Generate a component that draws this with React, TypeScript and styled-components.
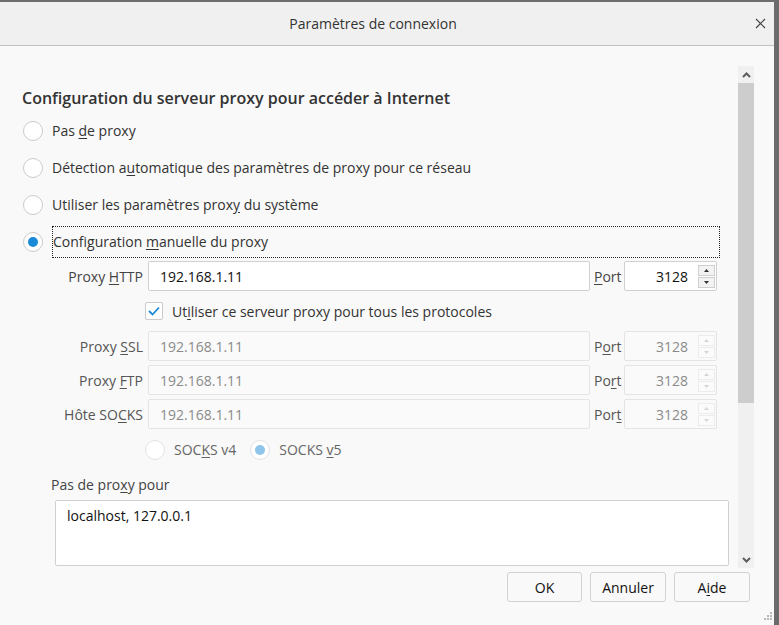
import React from "react";
import styled, { createGlobalStyle } from "styled-components";

const GlobalStyle = createGlobalStyle`
  html, body {
    margin: 0;
    padding: 0;
    background: #f9f9f9;
  }
  body {
    font-family: "Open Sans", "Noto Sans", sans-serif;
    font-size: 14px;
    color: #333;
  }
`;

const Window = styled.div`
  position: relative;
  width: 779px;
  height: 625px;
  box-sizing: border-box;
  border-top: 2px solid #6e6e6e;
  border-right: 5px solid #6b6b6b;
  background: #f9f9f9;
  display: flex;
  flex-direction: column;
  overflow: hidden;
`;

const TitleBar = styled.div`
  height: 43px;
  flex: none;
  display: flex;
  align-items: center;
  background: #f0f0f0;
  border-bottom: 1px solid #c3c3c3;
`;

const Title = styled.div`
  flex: 1;
  text-align: center;
  font-size: 14px;
  color: #333;
`;

const CloseButton = styled.div`
  width: 28px;
  height: 28px;
  display: flex;
  align-items: center;
  justify-content: center;
`;

const Body = styled.div`
  flex: 1;
  display: flex;
  flex-direction: column;
  padding-top: 20px;
`;

const ScrollPane = styled.div`
  height: 502px;
  display: flex;
  overflow: hidden;
`;

const Content = styled.div`
  flex: 1;
  padding: 22px 0 0 22px;
  overflow: hidden;
`;

const Heading = styled.h1`
  margin: 0 0 4px;
  font-size: 16px;
  line-height: 20px;
  font-weight: 600;
  color: #333;
`;

const RadioRow = styled.div`
  height: 37px;
  display: flex;
  align-items: center;
  padding-left: 1px;
  gap: 9px;
  padding-right: 18px;
`;

const RadioCircle = styled.span<{ $checked?: boolean; $disabled?: boolean }>`
  width: 18px;
  height: 18px;
  flex: none;
  border-radius: 50%;
  border: 1px solid ${(p) => (p.$disabled ? "#e2e2e2" : "#cbcbcb")};
  background: #fff;
  display: flex;
  align-items: center;
  justify-content: center;

  &::after {
    content: "";
    display: ${(p) => (p.$checked ? "block" : "none")};
    width: 10px;
    height: 10px;
    border-radius: 50%;
    background: ${(p) => (p.$disabled ? "#8fc5ea" : "#1a8ad8")};
  }
`;

const RadioLabel = styled.span<{ $focused?: boolean; $disabled?: boolean }>`
  line-height: 20px;
  color: ${(p) => (p.$disabled ? "#666" : "#333")};
  ${(p) =>
    p.$focused &&
    `
    flex: 1;
    border: 1px dotted #222;
    height: 30px;
    display: flex;
    align-items: center;
    padding-left: 0;
  `}
`;

const Key = styled.u`
  text-decoration: underline;
  text-underline-offset: 2px;
`;

const FieldGrid = styled.div`
  margin-top: 1px;
  padding-left: 33px;
  display: grid;
  grid-template-columns: 89px 442px 26px 93px;
  grid-auto-rows: auto;
  column-gap: 4px;
  row-gap: 4px;
  align-items: center;
`;

const FieldLabel = styled.span<{ $disabled?: boolean }>`
  text-align: right;
  padding-right: 1px;
  white-space: nowrap;
  color: ${(p) => (p.$disabled ? "#555" : "#444")};
`;

const TextBox = styled.div<{ $disabled?: boolean }>`
  height: 30px;
  box-sizing: border-box;
  border: 1px solid ${(p) => (p.$disabled ? "#e4e4e4" : "#d0d0d0")};
  border-radius: 2px;
  background: ${(p) => (p.$disabled ? "#fafafa" : "#fff")};
  color: ${(p) => (p.$disabled ? "#8a8a8a" : "#111")};
  display: flex;
  align-items: center;
  padding-left: 11px;
`;

const PortBox = styled(TextBox)`
  justify-content: flex-end;
  padding-left: 0;
  padding-right: 1px;
`;

const PortValue = styled.span`
  margin-right: 10px;
`;

const Spin = styled.div`
  width: 17px;
  height: 23px;
  display: flex;
  flex-direction: column;
  gap: 1px;
`;

const SpinButton = styled.div<{ $disabled?: boolean }>`
  flex: 1;
  box-sizing: border-box;
  border: 1px solid ${(p) => (p.$disabled ? "#ececec" : "#cfcfcf")};
  background: ${(p) => (p.$disabled ? "#fbfbfb" : "#f2f2f2")};
  display: flex;
  align-items: center;
  justify-content: center;
`;

const SpanRow = styled.div<{ $height: number }>`
  grid-column: 2 / -1;
  height: ${(p) => p.$height}px;
  margin-left: -3px;
  display: flex;
  align-items: center;
`;

const CheckBox = styled.span`
  width: 18px;
  height: 18px;
  box-sizing: border-box;
  border: 1px solid #cbcbcb;
  border-radius: 2px;
  background: #fff;
  display: flex;
  align-items: center;
  justify-content: center;
  margin-right: 9px;
`;

const SocksOption = styled.span`
  display: flex;
  align-items: center;
  gap: 9px;
  margin-right: 14px;
`;

const NoProxyLabel = styled.div`
  margin: 8px 0 5px 29px;
  line-height: 20px;
  color: #444;
`;

const TextArea = styled.div`
  margin-left: 33px;
  width: 674px;
  height: 66px;
  box-sizing: border-box;
  border: 1px solid #d0d0d0;
  border-radius: 2px;
  background: #fff;
  color: #111;
  padding: 5px 11px;
  line-height: 20px;
`;

const Scrollbar = styled.div`
  width: 16px;
  margin-right: 20px;
  background: #f0f0f0;
  display: flex;
  flex-direction: column;
`;

const ScrollArrow = styled.div`
  height: 17px;
  display: flex;
  align-items: center;
  justify-content: center;
`;

const ScrollThumb = styled.div`
  height: 320px;
  background: #cdcdcd;
`;

const ScrollTrack = styled.div`
  flex: 1;
`;

const ButtonRow = styled.div`
  margin-top: 4px;
  display: flex;
  justify-content: flex-end;
  gap: 8px;
  padding-right: 24px;
`;

const Button = styled.button<{ $width: number }>`
  width: ${(p) => p.$width}px;
  height: 30px;
  box-sizing: border-box;
  border: 1px solid #d2d2d2;
  border-radius: 3px;
  background: #f9f9f9;
  font-family: inherit;
  font-size: 14px;
  color: #111;
  padding: 0;
`;

const Grip = styled.svg`
  position: absolute;
  right: 1px;
  bottom: 4px;
`;

const Tri = ({ up, color }: { up?: boolean; color: string }) => (
  <svg width="5" height="3" viewBox="0 0 5 3">
    <path d={up ? "M0 3 L2.5 0 L5 3 Z" : "M0 0 L5 0 L2.5 3 Z"} fill={color} />
  </svg>
);

const Chevron = ({ up }: { up?: boolean }) => (
  <svg width="9" height="6" viewBox="0 0 9 6">
    <path
      d={up ? "M1 5 L4.5 1.5 L8 5" : "M1 1 L4.5 4.5 L8 1"}
      stroke="#5c5c5c"
      strokeWidth="2"
      fill="none"
    />
  </svg>
);

function PortField({ disabled }: { disabled?: boolean }) {
  const c = disabled ? "#d6d6d6" : "#333";
  return (
    <PortBox $disabled={disabled}>
      <PortValue>3128</PortValue>
      <Spin>
        <SpinButton $disabled={disabled}>
          <Tri up color={c} />
        </SpinButton>
        <SpinButton $disabled={disabled}>
          <Tri color={c} />
        </SpinButton>
      </Spin>
    </PortBox>
  );
}

const fields = [
  { pre: "Proxy ", key: "S", post: "SL", pPre: "P", pKey: "o", pPost: "rt" },
  { pre: "Proxy ", key: "F", post: "TP", pPre: "Po", pKey: "r", pPost: "t" },
  { pre: "Hôte SO", key: "C", post: "KS", pPre: "Por", pKey: "t", pPost: "" },
];

export default function App() {
  return (
    <>
      <GlobalStyle />
      <Window>
        <TitleBar>
          <Title>Paramètres de connexion</Title>
          <CloseButton>
            <svg width="11" height="11" viewBox="0 0 11 11">
              <path d="M1 1 L10 10 M10 1 L1 10" stroke="#444" strokeWidth="1.2" />
            </svg>
          </CloseButton>
        </TitleBar>

        <Body>
          <ScrollPane>
            <Content>
              <Heading>Configuration du serveur proxy pour accéder à Internet</Heading>

              <RadioRow>
                <RadioCircle />
                <RadioLabel>
                  Pas <Key>d</Key>e proxy
                </RadioLabel>
              </RadioRow>
              <RadioRow>
                <RadioCircle />
                <RadioLabel>
                  Détection a<Key>u</Key>tomatique des paramètres de proxy pour ce réseau
                </RadioLabel>
              </RadioRow>
              <RadioRow>
                <RadioCircle />
                <RadioLabel>
                  Utiliser les paramètres prox<Key>y</Key> du système
                </RadioLabel>
              </RadioRow>
              <RadioRow>
                <RadioCircle $checked />
                <RadioLabel $focused>
                  Configuration&nbsp;<Key>m</Key>anuelle du proxy
                </RadioLabel>
              </RadioRow>

              <FieldGrid>
                <FieldLabel>
                  Proxy <Key>H</Key>TTP
                </FieldLabel>
                <TextBox>192.168.1.11</TextBox>
                <FieldLabel>
                  <Key>P</Key>ort
                </FieldLabel>
                <PortField />

                <SpanRow $height={32}>
                  <CheckBox>
                    <svg width="12" height="10" viewBox="0 0 12 10">
                      <path d="M1 5 L4.5 8.5 L11 1.5" stroke="#1a8ad8" strokeWidth="1.8" fill="none" />
                    </svg>
                  </CheckBox>
                  <span>
                    Ut<Key>i</Key>liser ce serveur proxy pour tous les protocoles
                  </span>
                </SpanRow>

                {fields.map((f) => (
                  <React.Fragment key={f.key}>
                    <FieldLabel $disabled>
                      {f.pre}
                      <Key>{f.key}</Key>
                      {f.post}
                    </FieldLabel>
                    <TextBox $disabled>192.168.1.11</TextBox>
                    <FieldLabel $disabled>
                      {f.pPre}
                      <Key>{f.pKey}</Key>
                      {f.pPost}
                    </FieldLabel>
                    <PortField disabled />
                  </React.Fragment>
                ))}

                <SpanRow $height={34}>
                  <SocksOption>
                    <RadioCircle $disabled />
                    <RadioLabel $disabled>
                      SOC<Key>K</Key>S v4
                    </RadioLabel>
                  </SocksOption>
                  <SocksOption>
                    <RadioCircle $checked $disabled />
                    <RadioLabel $disabled>
                      SOCKS <Key>v</Key>5
                    </RadioLabel>
                  </SocksOption>
                </SpanRow>
              </FieldGrid>

              <NoProxyLabel>
                Pas de pro<Key>x</Key>y pour
              </NoProxyLabel>
              <TextArea>localhost, 127.0.0.1</TextArea>
            </Content>

            <Scrollbar>
              <ScrollArrow>
                <Chevron up />
              </ScrollArrow>
              <ScrollThumb />
              <ScrollTrack />
              <ScrollArrow>
                <Chevron />
              </ScrollArrow>
            </Scrollbar>
          </ScrollPane>

          <ButtonRow>
            <Button $width={75}>OK</Button>
            <Button $width={76}>Annuler</Button>
            <Button $width={76}>
              A<Key>i</Key>de
            </Button>
          </ButtonRow>
        </Body>

        <Grip width="10" height="10" viewBox="0 0 10 10">
          {[
            [7, 1],
            [4, 4],
            [7, 4],
            [1, 7],
            [4, 7],
            [7, 7],
          ].map(([x, y]) => (
            <rect key={`${x}-${y}`} x={x} y={y} width="2" height="2" fill="#b8b8b8" />
          ))}
        </Grip>
      </Window>
    </>
  );
}
